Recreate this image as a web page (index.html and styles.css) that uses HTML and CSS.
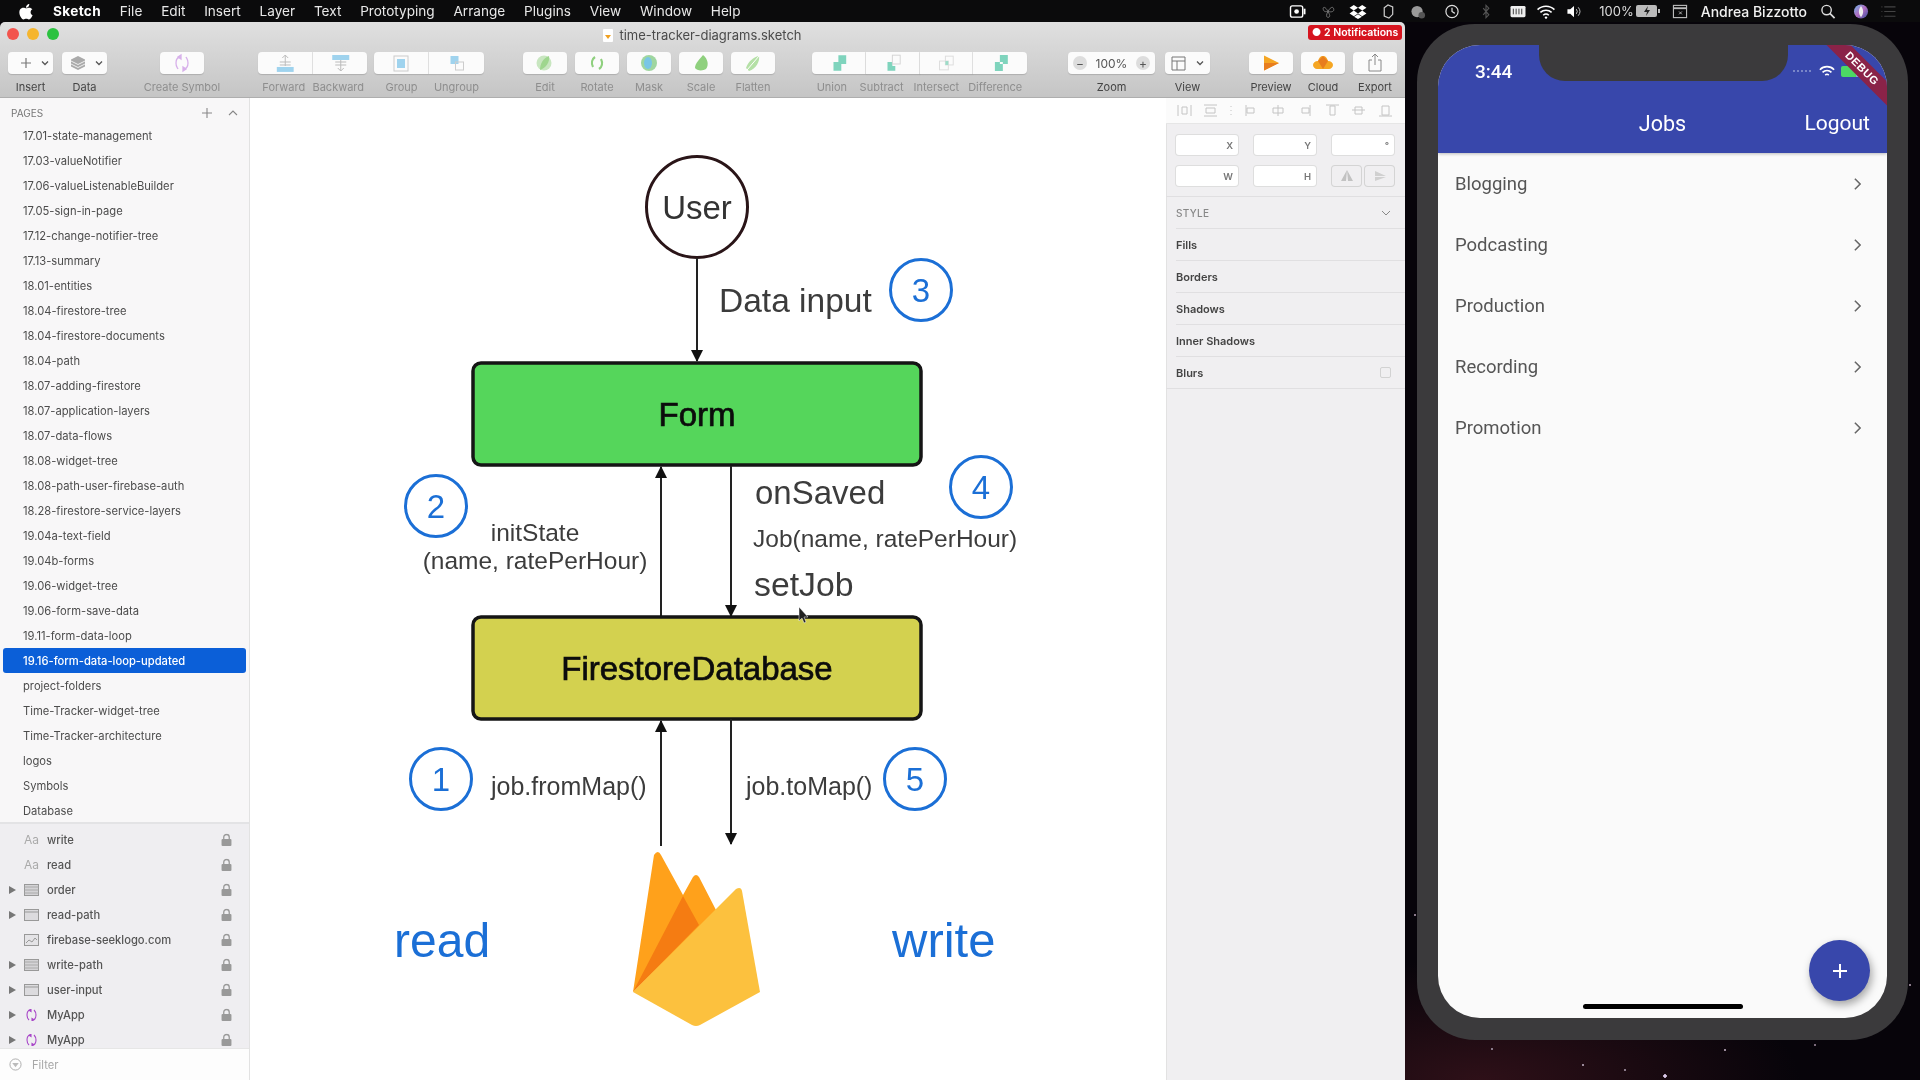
FILE: index.html
```html
<!DOCTYPE html>
<html lang="en">
<head>
<meta charset="utf-8">
<title>time-tracker-diagrams.sketch</title>
<link rel="stylesheet" href="styles.css">
</head>
<body>
<div class="desktop">
  <header class="menubar">
    <svg class="apple" viewBox="0 0 16 18" width="15" height="17"><path fill="#fff" d="M11 1c.1 1.200-.4 2.200-1 2.900-.7.800-1.700 1.300-2.600 1.200-.1-1.100.4-2.200 1-2.900C9.100 1.500 10.200 1 11 1zM14.500 13c-.4.900-.6 1.300-1.100 2.100-.7 1.100-1.700 2.400-2.900 2.400-1.100 0-1.400-.7-2.800-.7s-1.800.7-2.900.7c-1.200 0-2.100-1.200-2.800-2.300C.100 12.200-.1 8.700 1.100 6.900 2 5.600 3.400 4.900 4.700 4.900c1.300 0 2.100.7 3.200.7 1 0 1.700-.7 3.200-.7 1.100 0 2.300.6 3.200 1.700-2.800 1.500-2.400 5.500.2 6.400z"/></svg>
    <nav class="menu">
      <span class="menu-app">Sketch</span><span>File</span><span>Edit</span><span>Insert</span><span>Layer</span><span>Text</span><span>Prototyping</span><span>Arrange</span><span>Plugins</span><span>View</span><span>Window</span><span>Help</span>
    </nav>
    <div class="status">
      <svg class="st" viewBox="0 0 20 16"><rect x="2" y="2" width="13" height="12" rx="2" fill="none" stroke="#fff" stroke-width="1.500"/><circle cx="8.500" cy="8" r="2.500" fill="#fff"/><path d="M17 5v6" stroke="#fff" stroke-width="2"/></svg>
      <svg class="st dim" viewBox="0 0 20 16"><path d="M10 8C7 2 4 3 5 6s3 2 5 2c-3 5-1 7 1 6s0-4-1-6c4 1 7 0 6-3s-4-1-6 3z" fill="none" stroke="#777"/></svg>
      <svg class="st" viewBox="0 0 20 16"><path fill="#fff" d="M5.500 1 10 4 5.500 7 1 4zM14.500 1 19 4l-4.500 3L10 4zM5.500 7 10 10l-4.500 3L1 10zM14.500 7 19 10l-4.500 3L10 10zM5.800 13.500 10 11l4.200 2.500L10 16z"/></svg>
      <svg class="st" viewBox="0 0 20 16"><path d="M6 4l4-3 5 2 0 8-4 4-5-2z" fill="none" stroke="#ccc" stroke-width="1.300"/></svg>
      <svg class="st" viewBox="0 0 20 16"><circle cx="9" cy="8" r="6" fill="#999"/><circle cx="14" cy="12" r="3.500" fill="#555"/></svg>
      <svg class="st mx4" viewBox="0 0 20 16"><circle cx="10" cy="8" r="6.500" fill="none" stroke="#ddd" stroke-width="1.300"/><path d="M10 4v4l3 2" fill="none" stroke="#ddd" stroke-width="1.300"/></svg>
      <svg class="st mx4" viewBox="0 0 20 16"><path d="M7 4.500l6 7-3 3V1.500l3 3-6 7" fill="none" stroke="#555" stroke-width="1.200"/></svg>
      <svg class="st mx2" viewBox="0 0 20 16"><rect x="2" y="2" width="16" height="12" rx="1.500" fill="#eee"/><path d="M5 5v6M8 5v6M11 5v6M14 5v6" stroke="#333"/></svg>
      <svg class="st mn2" viewBox="0 0 20 16"><path d="M1 6a13 13 0 0 1 18 0M4 9a9 9 0 0 1 12 0M7 12a4.500 4.500 0 0 1 6 0" fill="none" stroke="#fff" stroke-width="1.700"/><circle cx="10" cy="14.500" r="1.300" fill="#fff"/></svg>
      <svg class="st mn2" viewBox="0 0 20 16"><path fill="#fff" d="M3 5.500h3L10 2v12L6 10.500H3z"/><path d="M12.500 5.500a4 4 0 0 1 0 5M14.500 3.500a7 7 0 0 1 0 9" fill="none" stroke="#ccc"/></svg>
      <span class="pct">100%</span>
      <svg class="batt" viewBox="0 0 24 14"><rect x="0" y="1" width="21" height="12" rx="2" fill="#bbb"/><rect x="22" y="5" width="2" height="4" fill="#bbb"/><path d="M12 2 8 8h3l-1 4 4-6h-3z" fill="#222"/></svg>
      <svg class="st" viewBox="0 0 20 16"><rect x="3" y="1.500" width="14" height="13" fill="none" stroke="#bbb" stroke-width="1.200"/><path d="M3 4.500h14" stroke="#bbb" stroke-width="2"/><path d="M9 8l3 3M12 8l-3 3" stroke="#bbb"/></svg>
      <span class="user">Andrea Bizzotto</span>
      <svg class="st search" viewBox="0 0 20 16"><circle cx="8.500" cy="6.500" r="5" fill="none" stroke="#ddd" stroke-width="1.500"/><path d="M12 10l5 5" stroke="#ddd" stroke-width="1.800"/></svg>
      <svg class="st siri" viewBox="0 0 20 16"><defs><linearGradient id="siriFill" x1="0" y1="0" x2="1" y2="1"><stop offset="0" stop-color="#6fb7e8"/><stop offset=".5" stop-color="#b06cc0"/><stop offset="1" stop-color="#3a50a0"/></linearGradient></defs><circle cx="10" cy="8" r="7.500" fill="url(#siriFill)"/><path d="M10 2c3 4 3 8 0 12-3-4-3-8 0-12z" fill="#eee"/></svg>
      <svg class="st mn3" viewBox="0 0 20 16"><path d="M3 3h1M6 3h12M3 8h1M6 8h12M3 13h1M6 13h12" stroke="#444" stroke-width="1.200"/></svg>
    </div>
  </header>

  <div class="workspace">
    <section class="window">
      <div class="titlebar">
        <div class="lights"><i class="light red"></i><i class="light amber"></i><i class="light green"></i></div>
        <div class="doc-title"><svg viewBox="0 0 10 13" width="10" height="13"><rect width="10" height="13" rx="1" fill="#fff"/><path d="M2 6h6L5 10z" fill="#f0a020"/></svg><span>time-tracker-diagrams.sketch</span></div>
        <div class="notif">● 2 Notifications</div>
      </div>

      <div class="toolbar">
        <div class="tool"><div class="btn w45"><svg viewBox="0 0 45 22"><path d="M18 6v10M13 11h10" stroke="#777" stroke-width="1.200"/><path d="M34 9.500l3 3 3-3" fill="none" stroke="#555" stroke-width="1.300"/></svg></div><span class="lbl on">Insert</span></div>
        <div class="tool m9"><div class="btn w45"><svg viewBox="0 0 45 22"><path d="M16 4l7 3.500v7L16 18l-7-3.500v-7z" fill="#aaa"/><path d="M9 9l7 3.500L23 9M9 12l7 3.500 7-3.500" fill="none" stroke="#eee"/><path d="M34 9.500l3 3 3-3" fill="none" stroke="#555" stroke-width="1.300"/></svg></div><span class="lbl on">Data</span></div>
        <div class="tool m53"><div class="btn"><svg viewBox="0 0 44 22"><path d="M21 5c-3 0-5 2-5 6s1 4 2 6M23 17c3 0 5-2 5-6s-1-4-2-6M21 3v4l-3-2zM23 19v-4l3 2z" fill="none" stroke="#d7b0ea" stroke-width="1.300"/></svg></div><span class="lbl">Create Symbol</span></div>
        <div class="seg m54 w109">
          <div class="tool"><div class="btn"><svg viewBox="0 0 54 22"><rect x="19" y="15" width="17" height="5" fill="#9fd3ee"/><path d="M27.500 3v11M24.500 6l3-3 3 3M22 10h11M22 13h11" fill="none" stroke="#bbb"/></svg></div><span class="lbl off3">Forward</span></div>
          <div class="tool"><div class="btn"><svg viewBox="0 0 54 22"><rect x="19" y="3" width="17" height="5" fill="#9fd3ee"/><path d="M27.500 8v11M24.500 16l3 3 3-3M22 10h11M22 13h11" fill="none" stroke="#bbb"/></svg></div><span class="lbl off3">Backward</span></div>
        </div>
        <div class="seg m7 w110">
          <div class="tool"><div class="btn"><svg viewBox="0 0 54 22"><rect x="20" y="4" width="14" height="15" fill="none" stroke="#ccc"/><rect x="23" y="7" width="8" height="9" fill="#9fd3ee"/></svg></div><span class="lbl">Group</span></div>
          <div class="tool"><div class="btn"><svg viewBox="0 0 54 22"><rect x="21" y="4" width="8" height="8" fill="#9fd3ee"/><rect x="26" y="10" width="8" height="8" fill="none" stroke="#ccc"/></svg></div><span class="lbl">Ungroup</span></div>
        </div>
        <div class="tool m39"><div class="btn"><svg viewBox="0 0 44 22"><circle cx="21" cy="11" r="7.500" fill="#c8e6c0"/><path d="M26 4c1 6-3 12-9 14 0-6 3-12 9-14z" fill="#9ed68e"/></svg></div><span class="lbl">Edit</span></div>
        <div class="tool m8"><div class="btn"><svg viewBox="0 0 44 22"><path d="M20 5c-3 2-4 6-2 10M24 17c3-2 4-6 2-10" fill="none" stroke="#8fd07e" stroke-width="2.200"/></svg></div><span class="lbl">Rotate</span></div>
        <div class="tool m8"><div class="btn"><svg viewBox="0 0 44 22"><circle cx="22" cy="11" r="8" fill="#9fd6a0"/><ellipse cx="21" cy="11" rx="4" ry="6" fill="#79c6e6"/></svg></div><span class="lbl">Mask</span></div>
        <div class="tool m8"><div class="btn"><svg viewBox="0 0 44 22"><path d="M24 3c5 4 6 10 3 14-3 2-9 2-11-1 0-5 5-9 8-13z" fill="#8fd07e"/></svg></div><span class="lbl">Scale</span></div>
        <div class="tool m8"><div class="btn"><svg viewBox="0 0 44 22"><path d="M28 4c1 5-3 13-10 15l-3-3C17 10 22 5 28 4z" fill="#b4e0a6"/><path d="M28 4 16 18" stroke="#fff"/></svg></div><span class="lbl">Flatten</span></div>
        <div class="seg m37 w215">
          <div class="tool"><div class="btn"><svg viewBox="0 0 54 22"><path d="M27 3h8v9h-5v7h-8v-9h5z" fill="#7fd4bd"/></svg></div><span class="lbl off14">Union</span></div>
          <div class="tool"><div class="btn"><svg viewBox="0 0 54 22"><path d="M22 10h5v4h3v5h-8z" fill="#7fd4bd"/><rect x="27" y="3" width="8" height="9" fill="none" stroke="#d5d5d5"/></svg></div><span class="lbl off22">Subtract</span></div>
          <div class="tool"><div class="btn"><svg viewBox="0 0 54 22"><rect x="20" y="9" width="9" height="9" fill="none" stroke="#ddd"/><rect x="26" y="4" width="8" height="9" fill="none" stroke="#ddd"/><rect x="26" y="9" width="3" height="4" fill="#9ddcc8"/></svg></div><span class="lbl off20">Intersect</span></div>
          <div class="tool"><div class="btn"><svg viewBox="0 0 54 22"><path d="M27 3h8v9h-5v7h-8v-9h5zM27 10v2h3v-2z" fill="#7fd4bd" fill-rule="evenodd"/></svg></div><span class="lbl off10">Difference</span></div>
        </div>
        <div class="tool m41"><div class="btn w87 zoom"><b>−</b><span>100%</span><b>+</b></div><span class="lbl on">Zoom</span></div>
        <div class="tool m10"><div class="btn w45"><svg viewBox="0 0 45 22"><path d="M7 5h13v13H7zM7 9h13M12 9v9" fill="none" stroke="#777"/><path d="M32 9.500l3 3 3-3" fill="none" stroke="#555" stroke-width="1.300"/></svg></div><span class="lbl on">View</span></div>
        <div class="tool m39"><div class="btn"><svg viewBox="0 0 44 22"><path d="M15 3.500 30 11 15 18.500z" fill="#f5a623"/><path d="M15 11h15l-15 7.500z" fill="#e87d1e"/></svg></div><span class="lbl on">Preview</span></div>
        <div class="tool m8"><div class="btn"><svg viewBox="0 0 44 22"><path d="M22 4c3 0 4 2 5 5 3 0 5 2 5 4s-2 4-4 4H16c-2 0-4-2-4-4s2-4 5-4c1-3 2-5 5-5z" fill="#f5a623"/><path d="M22 4l5 5-5 8-5-8z" fill="#e87d1e"/></svg></div><span class="lbl on">Cloud</span></div>
        <div class="tool m8"><div class="btn"><svg viewBox="0 0 44 22"><path d="M22 2v11M19 5l3-3 3 3M19 8h-3v11h12V8h-3" fill="none" stroke="#888"/></svg></div><span class="lbl on">Export</span></div>
      </div>

      <div class="panes">
        <aside class="sidebar">
          <div class="pages-head"><span>PAGES</span><svg viewBox="0 0 40 12" width="40" height="12"><path d="M6 1v10M1 6h10" stroke="#888" stroke-width="1.100"/><path d="M28 8l4-4 4 4" fill="none" stroke="#888" stroke-width="1.100"/></svg></div>
          <ul class="pages">
            <li>17.01-state-management</li><li>17.03-valueNotifier</li><li>17.06-valueListenableBuilder</li><li>17.05-sign-in-page</li><li>17.12-change-notifier-tree</li><li>17.13-summary</li><li>18.01-entities</li><li>18.04-firestore-tree</li><li>18.04-firestore-documents</li><li>18.04-path</li><li>18.07-adding-firestore</li><li>18.07-application-layers</li><li>18.07-data-flows</li><li>18.08-widget-tree</li><li>18.08-path-user-firebase-auth</li><li>18.28-firestore-service-layers</li><li>19.04a-text-field</li><li>19.04b-forms</li><li>19.06-widget-tree</li><li>19.06-form-save-data</li><li>19.11-form-data-loop</li><li class="sel">19.16-form-data-loop-updated</li><li>project-folders</li><li>Time-Tracker-widget-tree</li><li>Time-Tracker-architecture</li><li>logos</li><li>Symbols</li><li>Database</li>
          </ul>
          <ul class="layers">
            <li><i class="tri none"></i><span class="aa">Aa</span><span class="name">write</span><svg class="lock" viewBox="0 0 10 12"><use href="#lk"/></svg></li>
            <li><i class="tri none"></i><span class="aa">Aa</span><span class="name">read</span><svg class="lock" viewBox="0 0 10 12"><use href="#lk"/></svg></li>
            <li><i class="tri"></i><svg class="lic" viewBox="0 0 15 12"><use href="#fs"/></svg><span class="name">order</span><svg class="lock" viewBox="0 0 10 12"><use href="#lk"/></svg></li>
            <li><i class="tri"></i><svg class="lic" viewBox="0 0 15 12"><use href="#fd"/></svg><span class="name">read-path</span><svg class="lock" viewBox="0 0 10 12"><use href="#lk"/></svg></li>
            <li><i class="tri none"></i><svg class="lic" viewBox="0 0 15 12"><rect x=".5" y=".5" width="14" height="11" fill="#e4e3e6" stroke="#999"/><path d="M2 9l3-3 3 2 3-4 2 2" fill="none" stroke="#999"/></svg><span class="name">firebase-seeklogo.com</span><svg class="lock" viewBox="0 0 10 12"><use href="#lk"/></svg></li>
            <li><i class="tri"></i><svg class="lic" viewBox="0 0 15 12"><use href="#fs"/></svg><span class="name">write-path</span><svg class="lock" viewBox="0 0 10 12"><use href="#lk"/></svg></li>
            <li><i class="tri"></i><svg class="lic" viewBox="0 0 15 12"><use href="#fd"/></svg><span class="name">user-input</span><svg class="lock" viewBox="0 0 10 12"><use href="#lk"/></svg></li>
            <li><i class="tri"></i><svg class="lic" viewBox="0 0 15 12"><use href="#sy"/></svg><span class="name">MyApp</span><svg class="lock" viewBox="0 0 10 12"><use href="#lk"/></svg></li>
            <li><i class="tri"></i><svg class="lic" viewBox="0 0 15 12"><use href="#sy"/></svg><span class="name">MyApp</span><svg class="lock" viewBox="0 0 10 12"><use href="#lk"/></svg></li>
          </ul>
          <div class="filter"><svg viewBox="0 0 14 14" width="13" height="13"><circle cx="7" cy="7" r="6" fill="none" stroke="#aaa"/><path d="M3.500 5.500h7L7 10z" fill="#bbb"/></svg><span>Filter</span></div>
        </aside>

        <main class="canvas">
          <svg class="diagram" viewBox="250 98 916 982" width="916" height="982">
            <defs>
              <marker id="ah" viewBox="0 0 12 14" refX="11" refY="6" markerWidth="12" markerHeight="14" markerUnits="userSpaceOnUse" orient="auto"><path d="M0 0 12 6 0 12z" fill="#111"/></marker>
            </defs>
            <circle class="user-node" cx="697" cy="207" r="50.500"/>
            <text class="t32 mid" x="697" y="219">User</text>
            <path class="wire" d="M697 258V361" marker-end="url(#ah)"/>
            <text class="t33 w335" x="719" y="312">Data input</text>
            <circle class="num-c" cx="921" cy="290" r="30.500"/><text class="num mid" x="921" y="302">3</text>

            <rect class="box form" x="473" y="363" width="448" height="102" rx="8"/>
            <text class="boxt mid" x="697" y="426">Form</text>

            <path class="wire" d="M661 617V467" marker-end="url(#ah)"/>
            <path class="wire" d="M731 466V616" marker-end="url(#ah)"/>
            <circle class="num-c" cx="436" cy="506" r="30.500"/><text class="num mid" x="436" y="518">2</text>
            <text class="t24 mid" x="535" y="541">initState</text>
            <text class="t24 mid" x="535" y="569">(name, ratePerHour)</text>
            <text class="t33" x="755" y="504">onSaved</text>
            <text class="t24" x="753" y="547">Job(name, ratePerHour)</text>
            <text class="t33 w338" x="754" y="596">setJob</text>
            <circle class="num-c" cx="981" cy="487" r="30.500"/><text class="num mid" x="981" y="499">4</text>

            <rect class="box fire" x="473" y="617" width="448" height="102" rx="8"/>
            <text class="boxt mid" x="697" y="680">FirestoreDatabase</text>
            <path class="cursor" d="M799 607v14l3-3 2 5 2-1-2-5h4z"/>

            <path class="wire" d="M661 846V721" marker-end="url(#ah)"/>
            <path class="wire" d="M731 719V844" marker-end="url(#ah)"/>
            <circle class="num-c" cx="441" cy="779" r="30.500"/><text class="num mid" x="441" y="791">1</text>
            <text class="t25" x="491" y="795">job.fromMap()</text>
            <text class="t25" x="746" y="795">job.toMap()</text>
            <circle class="num-c" cx="915" cy="779" r="30.500"/><text class="num mid" x="915" y="791">5</text>

            <text class="big" x="394" y="957">read</text>
            <text class="big wr" x="892" y="957">write</text>

            <path fill="#ffa11b" d="M633 992 654 855q4-6 7 0l22 40 10-18q3-4 6 0l17 33-40 40z"/>
            <path fill="#f57c12" d="M633 992 683 896 699 925z"/>
            <path fill="#fcc13e" d="M633 992 736 889q5-3 6 2l18 101-60 33q-4 2-8 0z"/>
          </svg>
        </main>

        <aside class="inspector">
          <div class="align"><svg viewBox="0 0 239 25" width="239" height="25"><g fill="none" stroke="#c4c4c4"><path d="M12 7v11M25 7v11M16 9h5v7h-5zM38 7h13M38 18h13M40 10h9v5h-9zM65 8v1M65 12v1M65 16v1M80 7v11M81 10h7v5h-7zM112 7v11M107 10h10v5h-10zM144 7v11M136 10h7v5h-7zM160 7h13M164 8h5v9h-5zM186 12h13M189 9h7v7h-7zM213 18h13M216 8h7v9h-7z"/></g></svg></div>
          <div class="fields">
            <div class="fld"><span>X</span></div><div class="fld"><span>Y</span></div><div class="fld"><span>°</span></div>
            <div class="fld"><span>W</span></div><div class="fld"><span>H</span></div>
            <div class="flips">
              <div class="flip"><svg viewBox="0 0 14 14" width="14" height="14"><path d="M7 1 1 12h5zM7 1l6 11H8z" fill="#c2c2c2"/></svg></div>
              <div class="flip"><svg viewBox="0 0 14 14" width="14" height="14"><path d="M2 2l11 5H2zM2 8h11L2 12z" fill="#d0d0d0"/></svg></div>
            </div>
          </div>
          <div class="style-head"><span>STYLE</span><svg viewBox="0 0 10 6" width="10" height="6"><path d="M1 1l4 4 4-4" fill="none" stroke="#888"/></svg></div>
          <ul class="styles">
            <li>Fills</li><li>Borders</li><li>Shadows</li><li>Inner Shadows</li><li class="blurs">Blurs<i class="check"></i></li>
          </ul>
        </aside>
      </div>
    </section>

    <section class="stage">
      <div class="phone">
        <div class="screen">
          <div class="appbar">
            <div class="statusbar"><span class="time">3:44</span>
              <div class="st-icons">
                <span class="dots"></span>
                <svg viewBox="0 0 18 14" width="16" height="13"><path d="M1 5a11 11 0 0 1 16 0M4 8a7 7 0 0 1 10 0M7 11a3 3 0 0 1 4 0" fill="none" stroke="#fff" stroke-width="1.800"/></svg>
                <span class="pbatt"></span>
              </div>
            </div>
            <div class="titlerow"><h1>Jobs</h1><span class="logout">Logout</span></div>
          </div>
          <ul class="jobs">
            <li>Blogging<svg viewBox="0 0 10 16" width="9" height="14"><path d="M2 2l6 6-6 6" fill="none" stroke="#666" stroke-width="1.800"/></svg></li>
            <li>Podcasting<svg viewBox="0 0 10 16" width="9" height="14"><path d="M2 2l6 6-6 6" fill="none" stroke="#666" stroke-width="1.800"/></svg></li>
            <li>Production<svg viewBox="0 0 10 16" width="9" height="14"><path d="M2 2l6 6-6 6" fill="none" stroke="#666" stroke-width="1.800"/></svg></li>
            <li>Recording<svg viewBox="0 0 10 16" width="9" height="14"><path d="M2 2l6 6-6 6" fill="none" stroke="#666" stroke-width="1.800"/></svg></li>
            <li>Promotion<svg viewBox="0 0 10 16" width="9" height="14"><path d="M2 2l6 6-6 6" fill="none" stroke="#666" stroke-width="1.800"/></svg></li>
          </ul>
          <div class="notch"></div>
          <div class="ribbon">DEBUG</div>
          <div class="fab"><svg viewBox="0 0 16 16" width="16" height="16"><path d="M8 1v14M1 8h14" stroke="#fff" stroke-width="2"/></svg></div>
          <div class="homebar"></div>
        </div>
      </div>
    </section>
  </div>
</div>
<svg class="defs" width="0" height="0">
  <symbol id="lk" viewBox="0 0 10 12"><path d="M2.500 6V3.500a2.500 2.500 0 0 1 5 0V6" fill="none" stroke="#999" stroke-width="1.200"/><rect x=".5" y="5" width="9" height="6.500" rx="1" fill="#999"/></symbol>
  <symbol id="fd" viewBox="0 0 15 12"><rect x=".5" y=".5" width="14" height="11" fill="#dcdbde" stroke="#999"/><path d="M.5 3h14" stroke="#999"/></symbol>
  <symbol id="fs" viewBox="0 0 15 12"><rect x=".5" y=".5" width="14" height="11" fill="#d4d3d6" stroke="#999"/><path d="M.5 3h14M.5 6h14M.5 9h14" stroke="#aaa"/></symbol>
  <symbol id="sy" viewBox="0 0 15 12"><path d="M7 1C4 1 3 3 3 6s1 4 2 5M8 11c3 0 4-2 4-5s-1-4-2-5M7 0v2.500L5 1.200zM8 12V9.500l2 1.300z" fill="none" stroke="#a846c8" stroke-width="1.100"/></symbol>
</svg>
</body>
</html>
```

FILE: styles.css
```css
* { box-sizing: border-box; }
html, body { margin: 0; height: 100%; }
body { font-family: Inter, "Liberation Sans", sans-serif; background: #000; overflow: hidden; }
ul { list-style: none; margin: 0; padding: 0; }
.defs { position: absolute; }

.desktop {
  width: 1920px; height: 1080px; display: flex; flex-direction: column;
  filter: blur(.35px);
  background:
    radial-gradient(circle at 1665px 1076px, #d9c8e8 0 1.500px, transparent 2px),
    radial-gradient(circle at 1415px 915px, #8a7a8a 0 1px, transparent 1.500px),
    radial-gradient(circle at 1583px 1065px, #9a8a9a 0 1px, transparent 1.500px),
    radial-gradient(circle at 1910px 985px, #8a7a8a 0 1px, transparent 1.500px),
    radial-gradient(circle at 1725px 1050px, #9a8a9a 0 1px, transparent 1.500px),
    radial-gradient(circle at 1492px 1049px, #8a7a8a 0 1px, transparent 1.500px),
    radial-gradient(circle at 1625px 1070px, #8a7a8a 0 1px, transparent 1.500px),
    radial-gradient(circle at 1815px 1045px, #7a6a7a 0 1px, transparent 1.500px),
    radial-gradient(ellipse 320px 120px at 1480px 1080px, #2e1018, transparent),
    #07040a;
}

/* Menu bar */
.menubar { height: 22px; flex: none; display: flex; align-items: center; background: #0b0b0c; color: #e8e8e8; font-size: 13.600px; padding: 0 17px 0 19px; }
.apple { flex: none; }
.menu { display: flex; gap: 18.800px; margin-left: 19px; }
.menu-app { font-weight: 700; color: #fff; letter-spacing: .35px; }
.status { margin-left: auto; display: flex; align-items: center; }
.st { width: 30px; height: 15px; flex: none; }
.mx4 { margin-left: 4px; }
.mx2 { margin-left: 2px; }
.mn2 { margin-left: -2px; }
.mn3 { margin-left: -3px; }
.pct { font-size: 13px; margin-left: 10px; color: #ddd; }
.batt { width: 24px; height: 14px; margin-left: 2px; margin-right: 5px; }
.user { margin-left: 6px; color: #f2f2f2; font-size: 14px; font-weight: 500; }
.search { margin-left: 6px; }
.siri { margin-left: 3px; }

/* Window */
.workspace { flex: 1; display: flex; min-height: 0; }
.window { width: 1405px; flex: none; display: flex; flex-direction: column; border-radius: 5px 5px 0 0; overflow: hidden; }
.titlebar { height: 28px; flex: none; position: relative; display: flex; align-items: center; justify-content: center; background: linear-gradient(#e0e0e0, #d6d6d6); padding-bottom: 2px; }
.lights { position: absolute; left: 7px; top: 6px; display: flex; gap: 8px; }
.light { width: 12px; height: 12px; border-radius: 50%; display: block; }
.red { background: #f2544d; }
.amber { background: #f5b52e; }
.green { background: #2cc240; }
.doc-title { display: flex; align-items: center; gap: 6px; font-size: 13px; color: #4a4a4a; }
.notif { position: absolute; right: 3px; top: 3px; width: 94px; height: 15px; border-radius: 3px; background: #d6141f; color: #fff; font-size: 10.500px; font-weight: 600; display: flex; align-items: center; justify-content: center; }

.toolbar { height: 48px; flex: none; display: flex; padding: 2px 0 0 8px; background: linear-gradient(#d6d6d6, #c5c5c5); border-bottom: 1px solid #aeaeae; }
.tool { width: 44px; flex: none; display: flex; flex-direction: column; align-items: center; }
.btn { width: 100%; height: 22px; flex: none; background: #fbfbfb; border-radius: 4px; box-shadow: 0 1px 1px rgba(0,0,0,.15); overflow: hidden; }
.btn svg { display: block; width: 100%; height: 100%; }
.w45 { width: 45px; }
.w87 { width: 87px; }
.tool:has(.w45) { width: 45px; }
.tool:has(.w87) { width: 87px; }
.lbl { margin-top: 6px; font-size: 11px; line-height: 14px; color: #8e8e8e; white-space: nowrap; }
.lbl.on { color: #444; }
.off3 { margin-right: 3px; }
.off10 { margin-right: 10px; }
.off14 { margin-right: 14px; }
.off20 { margin-right: 20px; }
.off22 { margin-right: 22px; }
.seg { display: flex; flex: none; }
.seg .tool { flex: 1 1 0; width: auto; min-width: 0; }
.seg .btn { border-radius: 0; border-right: 1px solid #e2e2e2; }
.seg .tool:first-child .btn { border-radius: 4px 0 0 4px; }
.seg .tool:last-child .btn { border-radius: 0 4px 4px 0; border-right: 0; }
.w109 { width: 109px; }
.w110 { width: 110px; }
.w215 { width: 215px; }
.m7 { margin-left: 7px; } .m8 { margin-left: 8px; } .m9 { margin-left: 9px; } .m10 { margin-left: 10px; }
.m37 { margin-left: 37px; } .m39 { margin-left: 39px; } .m41 { margin-left: 41px; } .m53 { margin-left: 53px; } .m54 { margin-left: 54px; }
.zoom { display: flex; align-items: center; justify-content: space-between; padding: 0 5px; font-size: 12px; color: #555; }
.zoom b { width: 14px; height: 14px; border-radius: 50%; background: #ddd; display: flex; align-items: center; justify-content: center; font-weight: 400; font-size: 12px; }

.panes { flex: 1; display: flex; min-height: 0; }

/* Sidebar */
.sidebar { width: 250px; flex: none; display: flex; flex-direction: column; background: #f8f7f8; border-right: 1px solid #e2e2e2; font-size: 11.200px; color: #4c4c4c; }
.pages-head { height: 25px; flex: none; display: flex; align-items: center; justify-content: space-between; padding: 5px 8px 0 11px; font-size: 10px; color: #777; }
.pages { flex: none; height: 699px; }
.pages li { height: 25px; display: flex; align-items: center; padding-left: 23px; }
.pages .sel { background: #0b5fd8; color: #fff; margin: 0 3px; padding-left: 20px; border-radius: 3px; font-weight: 500; }
.layers { flex: 1; min-height: 0; overflow: hidden; background: #efeef1; border-top: 2px solid #e3e3e5; padding-top: 3px; }
.layers li { height: 25px; display: flex; align-items: center; padding-left: 9px; }
.tri { width: 0; height: 0; border-left: 7px solid #777; border-top: 4px solid transparent; border-bottom: 4px solid transparent; margin-right: 8px; }
.tri.none { border-left-color: transparent; }
.aa { width: 15px; color: #aaa; font-size: 12px; }
.lic { width: 15px; height: 12px; flex: none; }
.name { margin-left: 8px; font-weight: 500; color: #555; }
.lock { width: 11px; height: 14px; margin-left: auto; margin-right: 17px; }
.filter { height: 32px; flex: none; display: flex; align-items: center; gap: 10px; padding-left: 9px; background: #fdfdfd; color: #a8a8a8; border-top: 1px solid #e6e6e6; }

/* Canvas */
.canvas { flex: 1; min-width: 0; background: #fff; }
.diagram { display: block; }
.wire { fill: none; stroke: #222; stroke-width: 2; }
.user-node { fill: #fff; stroke: #2a1518; stroke-width: 3; }
.num-c { fill: none; stroke: #1b6fd6; stroke-width: 3; }
.box { stroke: #151515; stroke-width: 3.500; }
.form { fill: #55d65b; }
.fire { fill: #d3d14f; }
.boxt { font: 33px "Liberation Sans", sans-serif; fill: #0c0c0c; stroke: #0c0c0c; stroke-width: .7px; }
.t32 { font: 33px "Liberation Sans", sans-serif; fill: #333; }
.t33 { font: 33px "Liberation Sans", sans-serif; fill: #3c3c3c; }
.w335 { font-size: 33.500px; }
.w338 { font-size: 33.800px; }
.t24 { font: 24.500px "Liberation Sans", sans-serif; fill: #3c3c3c; }
.t25 { font: 25px "Liberation Sans", sans-serif; fill: #3c3c3c; }
.num { font: 33px "Liberation Sans", sans-serif; fill: #1b6fd6; }
.big { font: 48px "Liberation Sans", sans-serif; fill: #1b6fd6; }
.wr { font-size: 49px; }
.mid { text-anchor: middle; }
.cursor { fill: #222; stroke: #fff; stroke-width: .5; }

/* Inspector */
.inspector { width: 239px; flex: none; background: #f0eff1; font-size: 11px; color: #444; box-shadow: inset 1px 0 0 #e2e2e2; }
.align { height: 26px; background: #fbfbfb; border-bottom: 1px solid #e6e6e6; }
.align svg { display: block; }
.fields { display: grid; grid-template-columns: 62px 62px 62px; grid-auto-rows: 20px; gap: 11px 16px; padding: 11px 0 11px 10px; border-bottom: 1px solid #e0dfe1; height: 73px; }
.fld { background: #fff; border-radius: 3px; box-shadow: 0 0 0 1px #dedede; display: flex; align-items: center; justify-content: flex-end; padding-right: 5px; font-size: 9.500px; font-weight: 600; color: #777; }
.flips { display: flex; gap: 4px; }
.flip { flex: 1; border-radius: 3px; box-shadow: 0 0 0 1px #d4d4d4; display: flex; align-items: center; justify-content: center; }
.style-head { height: 32px; margin-left: 10px; display: flex; align-items: center; justify-content: space-between; padding-right: 14px; font-size: 10px; font-weight: 500; color: #888; border-bottom: 1px solid #e0dfe1; letter-spacing: .3px; }
.styles li { height: 32px; margin-left: 10px; display: flex; align-items: center; justify-content: space-between; padding-right: 14px; font-weight: 600; border-bottom: 1px solid #e0dfe1; }
.styles .blurs { margin-left: 0; padding-left: 10px; }
.check { width: 11px; height: 11px; border-radius: 2px; border: 1px solid #d2d2d2; }

/* Phone */
.stage { flex: 1; padding: 2px 0 0 12px; }
.phone { width: 491px; height: 1016px; background: #3b3a3c; border-radius: 58px; padding: 21px 21px 22px; }
.screen { position: relative; height: 100%; background: #fafafa; border-radius: 42px; overflow: hidden; display: flex; flex-direction: column; font-family: Roboto, sans-serif; }
.appbar { height: 108px; flex: none; background: #3847ab; color: #fff; box-shadow: 0 1px 3px rgba(0,0,0,.25); position: relative; z-index: 1; }
.statusbar { height: 52px; display: flex; align-items: center; justify-content: space-between; padding: 0 24px 0 37px; }
.time { font-size: 19px; font-weight: 500; }
.st-icons { display: flex; align-items: center; gap: 6px; }
.dots { width: 18px; height: 2px; margin-right: 2px; background: repeating-linear-gradient(90deg, #7986c8 0 2px, transparent 2px 4px); }
.pbatt { width: 22px; height: 11px; background: linear-gradient(90deg, #4cd964 70%, #8fa0d8 70%); border-radius: 2px; }
.titlerow { height: 52px; position: relative; display: flex; align-items: center; justify-content: flex-end; padding-right: 17px; }
.titlerow h1 { position: absolute; left: 0; right: 0; margin: 0; text-align: center; font-size: 21.500px; font-weight: 400; }
.logout { position: relative; font-size: 21px; }
.jobs { flex: 1; }
.jobs li { height: 61px; display: flex; align-items: center; justify-content: space-between; padding: 0 25px 0 17px; font-size: 18.500px; color: #555; }
.notch { position: absolute; left: 101px; top: 0; width: 249px; height: 36px; background: #3b3a3c; border-radius: 0 0 26px 26px; z-index: 2; }
.ribbon { position: absolute; right: -40px; top: 15px; width: 130px; height: 17px; background: #8a2348; color: #fff; font: 700 11px/17px "Liberation Sans", sans-serif; letter-spacing: .5px; text-align: center; transform: rotate(45deg); z-index: 3; }
.fab { position: absolute; left: 371px; top: 895px; width: 61px; height: 61px; border-radius: 50%; background: #3847ab; display: flex; align-items: center; justify-content: center; box-shadow: 2px 4px 8px rgba(0,0,0,.35); }
.homebar { position: absolute; left: 145px; top: 959px; width: 160px; height: 5px; border-radius: 3px; background: #000; }
```
